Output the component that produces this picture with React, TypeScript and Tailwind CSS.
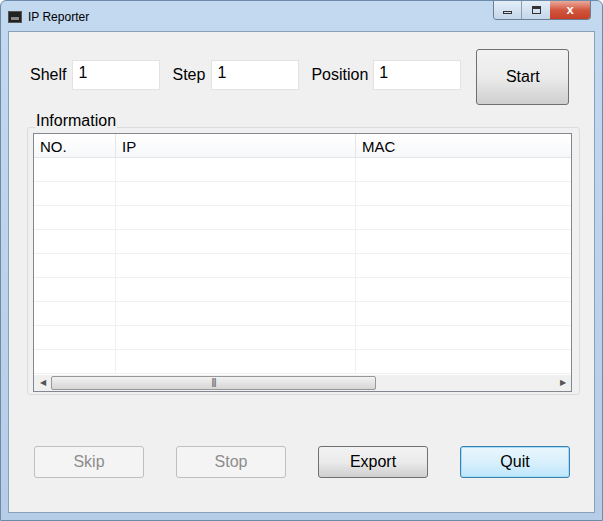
const rows = Array.from({ length: 9 });

function Btn({ label, kind }: { label: string; kind: "off" | "on" | "focus" }) {
  const cls =
    kind === "off"
      ? "border-[#bfbfbf] bg-[#f4f4f4] text-[#8d8d8d]"
      : kind === "focus"
      ? "border-[#3c7fb1] bg-gradient-to-b from-[#eaf6fd] via-[#d9f0fc] to-[#bee6fd] text-black shadow-[inset_0_0_0_1px_#9fdff9]"
      : "border-[#707070] bg-gradient-to-b from-[#f2f2f2] via-[#ebebeb] to-[#cfcfcf] text-black";
  return (
    <div className={`w-[110px] h-[32px] rounded-[3px] border flex items-center justify-center text-[16px] ${cls}`}>
      {label}
    </div>
  );
}

export default function App() {
  return (
    <div className="w-[603px] h-[521px] bg-white" style={{ fontFamily: '"Liberation Sans", Arial, sans-serif' }}>
      <div className="w-[603px] h-[521px] rounded-t-[6px] border border-[#6d8aa8] bg-gradient-to-b from-[#c2d9f0] to-[#b5cde6] flex flex-col">
        <div className="h-[30px] flex items-start justify-between pl-[7px] pr-[11px]">
          <div className="flex items-center gap-[6px] mt-[7px]">
            <div className="w-[14px] h-[12px] bg-[#222] border border-[#555] flex items-end justify-center">
              <div className="w-[8px] h-[3px] bg-[#888] mb-[2px]" />
            </div>
            <span className="text-[12px] text-black">IP Reporter</span>
          </div>
          <div className="flex border border-[#6b7f94] border-t-0 rounded-b-[4px] overflow-hidden h-[19px]">
            <div className="w-[28px] bg-gradient-to-b from-[#e4eef8] to-[#c4d6ea] border-r border-[#8ca0b5] flex items-center justify-center">
              <div className="w-[9px] h-[3px] border border-[#333] mt-[5px]" />
            </div>
            <div className="w-[28px] bg-gradient-to-b from-[#e4eef8] to-[#c4d6ea] flex items-center justify-center">
              <div className="w-[9px] h-[8px] border-[1.5px] border-[#333] border-t-[3px]" />
            </div>
            <div className="w-[40px] bg-gradient-to-b from-[#e9a99c] via-[#d2563f] to-[#c63f26] flex items-center justify-center text-white text-[13px] font-bold">
              x
            </div>
          </div>
        </div>
        <div className="mx-[7px] h-[482px] bg-[#f0f0f0] border border-[#8aa0b6] flex flex-col">
          <div className="flex items-start pl-[21px] pt-[17px] h-[78px]">
            <div className="flex items-center mt-[11px] text-[16px] text-black">
              <span>Shelf</span>
              <div className="ml-[6px] w-[88px] h-[30px] bg-white border border-[#e3e3e3] pl-[5px] leading-[24px]">1</div>
              <span className="ml-[12px]">Step</span>
              <div className="ml-[6px] w-[88px] h-[30px] bg-white border border-[#e3e3e3] pl-[5px] leading-[24px]">1</div>
              <span className="ml-[12px]">Position</span>
              <div className="ml-[5px] w-[88px] h-[30px] bg-white border border-[#e3e3e3] pl-[5px] leading-[24px]">1</div>
            </div>
            <div className="ml-[15px] w-[93px] h-[56px] rounded-[3px] border border-[#707070] bg-gradient-to-b from-[#f2f2f2] via-[#ebebeb] to-[#cfcfcf] flex items-center justify-center text-[16px]">
              Start
            </div>
          </div>
          <div className="relative ml-[18px] mt-[17px] w-[553px] h-[268px] border border-[#dcdcdc] rounded-[3px] pt-[5px] px-[5px]">
            <span className="absolute left-[7px] -top-[16px] bg-[#f0f0f0] px-[1px] text-[16px] leading-[18px]">Information</span>
            <div className="w-[539px] h-[259px] bg-white border border-[#828790] flex flex-col">
              <div className="flex h-[24px] border-b border-[#e5e5e5] text-[15px] leading-[26px] bg-gradient-to-b from-white to-[#f7f8fa]">
                <div className="w-[82px] pl-[6px] border-r border-[#e5e5e5]">NO.</div>
                <div className="w-[240px] pl-[6px] border-r border-[#e5e5e5]">IP</div>
                <div className="flex-1 pl-[6px]">MAC</div>
              </div>
              <div className="flex-1 flex flex-col overflow-hidden">
                {rows.map((_, i) => (
                  <div key={i} className="flex h-[24px] shrink-0 border-b border-[#f0f0f0]">
                    <div className="w-[82px] border-r border-[#f0f0f0]" />
                    <div className="w-[240px] border-r border-[#f0f0f0]" />
                    <div className="flex-1" />
                  </div>
                ))}
              </div>
              <div className="h-[16px] bg-[#f0f0f0] flex items-center text-[8px] text-[#555]">
                <span className="w-[17px] text-center">◀</span>
                <div className="w-[325px] h-[14px] rounded-[2px] border border-[#979797] bg-gradient-to-b from-[#f2f2f2] to-[#d6d6d6] flex items-center justify-center text-[9px] tracking-[-1px]">
                  |||
                </div>
                <div className="flex-1" />
                <span className="w-[17px] text-center">▶</span>
              </div>
            </div>
          </div>
          <div className="flex mt-[51px] pl-[25px] gap-[32px]">
            <Btn label="Skip" kind="off" />
            <Btn label="Stop" kind="off" />
            <Btn label="Export" kind="on" />
            <Btn label="Quit" kind="focus" />
          </div>
        </div>
      </div>
    </div>
  );
}
